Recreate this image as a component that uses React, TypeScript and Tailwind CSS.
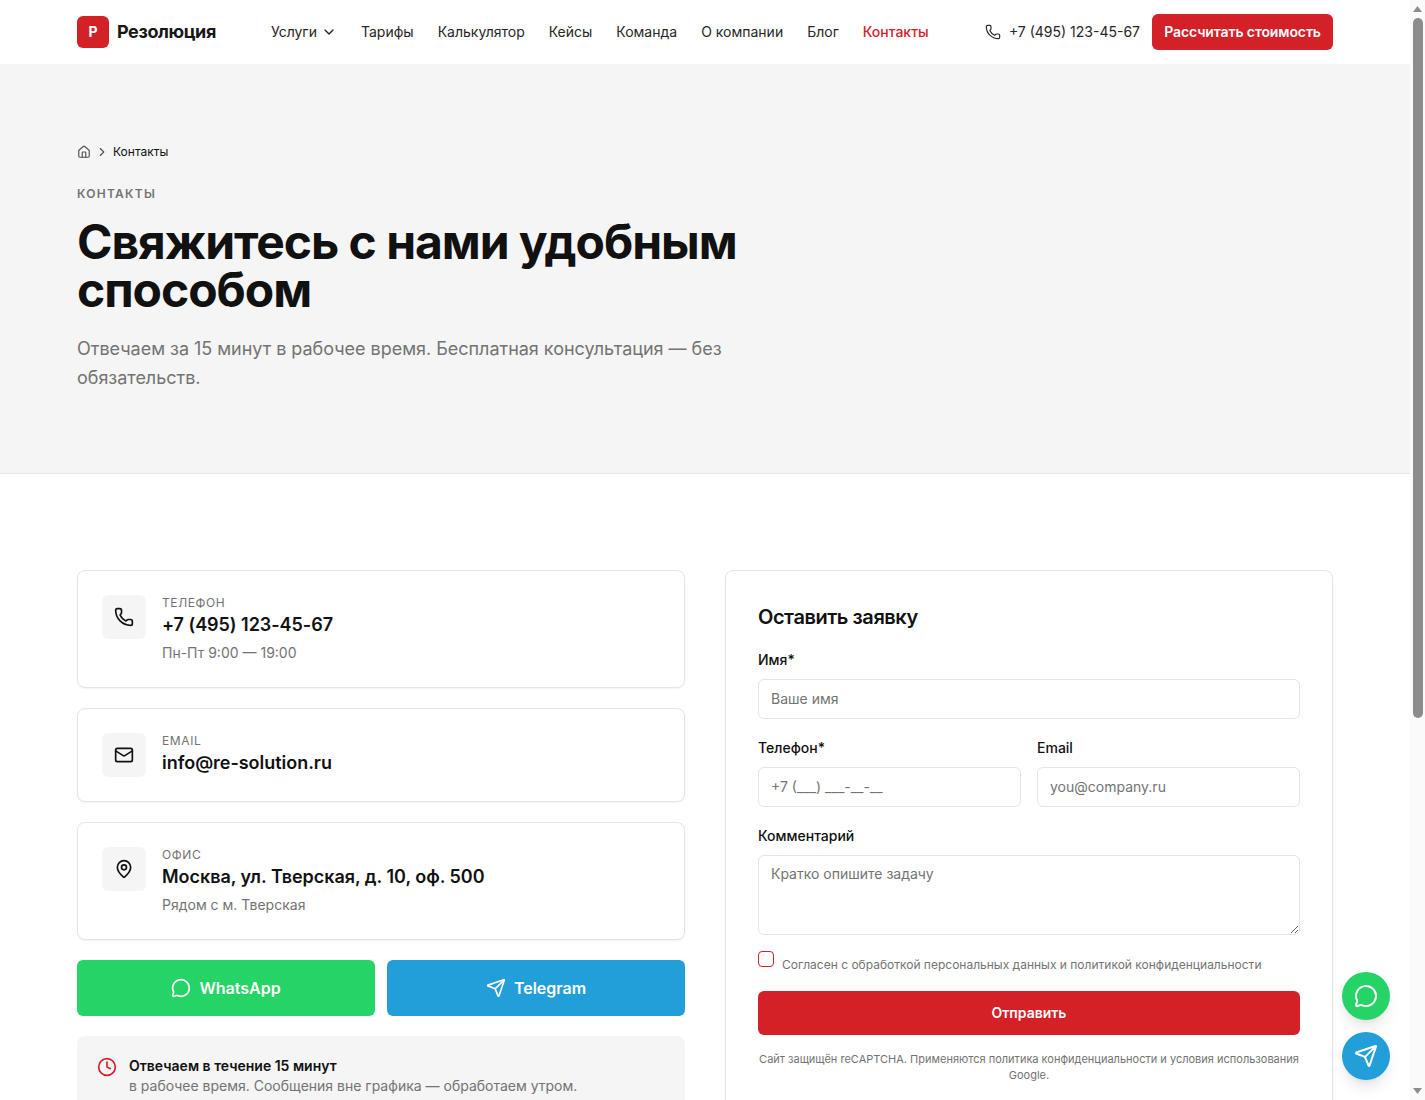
import { ChevronDown, ChevronRight, Clock, House, Mail, MapPin, MessageCircle, Phone, Send } from "lucide-react";
import type { ReactNode } from "react";

const navItems = ["Тарифы", "Калькулятор", "Кейсы", "Команда", "О компании", "Блог"];

const fieldClass =
  "mt-2 w-full rounded-md border border-[#e5e5e5] bg-white px-3 text-sm text-[#111] outline-none placeholder:text-[#737373]";

function InfoCard({ icon, label, value, note }: { icon: ReactNode; label: string; value: string; note?: string }) {
  return (
    <div className="flex gap-4 rounded-lg border border-[#e5e5e5] bg-white p-6 shadow-xs">
      <div className="flex h-11 w-11 shrink-0 items-center justify-center rounded-md bg-[#f5f5f5] text-[#111]">{icon}</div>
      <div>
        <div className="text-xs tracking-wider text-[#737373] uppercase">{label}</div>
        <div className="text-lg font-semibold tracking-[-0.03px] text-[#111]">{value}</div>
        {note ? <div className="mt-1 text-sm text-[#737373]">{note}</div> : null}
      </div>
    </div>
  );
}

function Field({ label, children }: { label: string; children: ReactNode }) {
  return (
    <div>
      <label className="block h-6 text-sm leading-[26px] font-medium text-[#111]">{label}</label>
      {children}
    </div>
  );
}

// the reference shows the browser's classic scrollbar, headless hides the real one
function FakeScrollbar() {
  return (
    <div className="fixed top-0 right-0 bottom-0 flex w-[15px] flex-col items-center bg-[#fafafa]">
      <svg viewBox="0 0 9 6" className="mt-[6px] h-[6px] w-[9px] fill-[#8c8c8c]">
        <path d="M4.5 0 9 6H0z" />
      </svg>
      <div className="mt-[6px] h-[700px] w-[10px] rounded-t-[5px] rounded-b-[5px] bg-[#8c8c8c]" />
      <svg viewBox="0 0 9 6" className="mt-auto mb-[6px] h-[6px] w-[9px] fill-[#8c8c8c]">
        <path d="M0 0h9L4.5 6z" />
      </svg>
    </div>
  );
}

export default function App() {
  return (
    <div className="min-h-[1680px] bg-white pr-[15px] font-['Inter',sans-serif] text-[#111]">
      <header className="h-16 bg-white">
        <div className="mx-auto flex h-full max-w-[1280px] items-center px-3">
          <a className="flex items-center gap-2">
            <span className="flex h-8 w-8 items-center justify-center rounded-md bg-[#d42027] text-sm font-bold text-white">Р</span>
            <span className="text-lg font-bold tracking-[-0.4px] text-[#171717]">Резолюция</span>
          </a>
          <nav className="ml-[55px] flex items-center gap-6 text-sm text-[#262626]">
            <a className="flex items-center gap-1">
              Услуги
              <ChevronDown className="h-4 w-4" />
            </a>
            {navItems.map((item) => (
              <a key={item}>{item}</a>
            ))}
            <a className="font-medium text-[#d42027]">Контакты</a>
          </nav>
          <div className="ml-auto flex items-center gap-2 text-sm text-[#262626]">
            <Phone className="h-4 w-4" strokeWidth={1.75} />
            <span>+7 (495) 123-45-67</span>
          </div>
          <button className="ml-3 h-9 w-[181px] rounded-md bg-[#d42027] text-sm font-semibold tracking-[-0.1px] text-white">
            Рассчитать стоимость
          </button>
        </div>
      </header>

      <section className="border-b border-[#e5e5e5] bg-[#f5f5f5]">
        <div className="mx-auto max-w-[1280px] px-3 pt-20 pb-[81px]">
          <div className="flex h-4 items-center gap-1 text-xs text-[#111]">
            <House className="h-3.5 w-3.5 text-[#525252]" />
            <ChevronRight className="h-3.5 w-3.5 text-[#525252]" />
            <span>Контакты</span>
          </div>
          <div className="mt-[26px] text-xs font-semibold tracking-[0.105em] text-[#737373] uppercase">Контакты</div>
          <h1 className="mt-4 max-w-[768px] text-5xl leading-[48px] font-bold tracking-[-1.05px] text-[#111]">
            Свяжитесь с нами удобным способом
          </h1>
          <p className="mt-5 max-w-[672px] text-lg leading-[29px] tracking-[-0.02px] text-[#737373]">
            Отвечаем за 15 минут в рабочее время. Бесплатная консультация — без обязательств.
          </p>
        </div>
      </section>

      <section className="mx-auto grid max-w-[1280px] grid-cols-2 items-start gap-10 px-3 py-24">
        <div className="flex flex-col gap-5">
          <InfoCard icon={<Phone className="h-5 w-5" />} label="Телефон" value="+7 (495) 123-45-67" note="Пн-Пт 9:00 — 19:00" />
          <InfoCard icon={<Mail className="h-5 w-5" />} label="Email" value="info@re-solution.ru" />
          <InfoCard icon={<MapPin className="h-5 w-5" />} label="Офис" value="Москва, ул. Тверская, д. 10, оф. 500" note="Рядом с м. Тверская" />
          <div className="grid grid-cols-2 gap-3">
            <a className="flex h-14 items-center justify-center gap-2 rounded-md bg-[#25d366] font-semibold text-white">
              <MessageCircle className="h-5 w-5" />
              WhatsApp
            </a>
            <a className="flex h-14 items-center justify-center gap-2 rounded-md bg-[#229ed9] font-semibold text-white">
              <Send className="h-5 w-5" />
              Telegram
            </a>
          </div>
          <div className="flex items-start gap-3 rounded-lg bg-[#f5f5f5] p-5">
            <Clock className="mt-px h-5 w-5 shrink-0 text-[#d42027]" />
            <div className="text-sm">
              <div className="font-semibold text-[#111]">Отвечаем в течение 15 минут</div>
              <div className="text-[#737373]">в рабочее время. Сообщения вне графика — обработаем утром.</div>
            </div>
          </div>
        </div>

        <form className="rounded-lg border border-[#e5e5e5] bg-white p-8 shadow-xs">
          <h2 className="text-xl font-semibold tracking-[-0.45px] text-[#111]">Оставить заявку</h2>
          <div className="mt-4 flex flex-col gap-4">
            <Field label="Имя*">
              <input className={`${fieldClass} h-10 pb-[2px]`} placeholder="Ваше имя" />
            </Field>
            <div className="grid grid-cols-2 gap-4">
              <Field label="Телефон*">
                <input className={`${fieldClass} h-10 pb-[2px]`} placeholder="+7 (___) ___-__-__" />
              </Field>
              <Field label="Email">
                <input className={`${fieldClass} h-10 pb-[2px]`} placeholder="you@company.ru" />
              </Field>
            </div>
            <Field label="Комментарий">
              <textarea className={`${fieldClass} block h-20 py-2`} placeholder="Кратко опишите задачу" />
            </Field>
            <label className="flex h-6 items-start gap-2">
              <span className="h-4 w-4 shrink-0 rounded border border-[#d42027] bg-white" />
              <span className="pt-1.5 text-xs text-[#737373]">Согласен с обработкой персональных данных и политикой конфиденциальности</span>
            </label>
            <button type="button" className="h-11 rounded-md bg-[#d42027] text-sm font-semibold text-white">
              Отправить
            </button>
            <p className="text-center text-[11px] leading-4 text-[#737373]">
              Сайт защищён reCAPTCHA. Применяются политика конфиденциальности и условия использования Google.
            </p>
          </div>
        </form>
      </section>

      <div className="fixed right-[35px] bottom-5 flex flex-col gap-3">
        <a className="flex h-12 w-12 items-center justify-center rounded-full bg-[#25d366] text-white shadow-lg">
          <MessageCircle className="h-6 w-6" />
        </a>
        <a className="flex h-12 w-12 items-center justify-center rounded-full bg-[#229ed9] text-white shadow-lg">
          <Send className="h-6 w-6" />
        </a>
      </div>
      <FakeScrollbar />
    </div>
  );
}
